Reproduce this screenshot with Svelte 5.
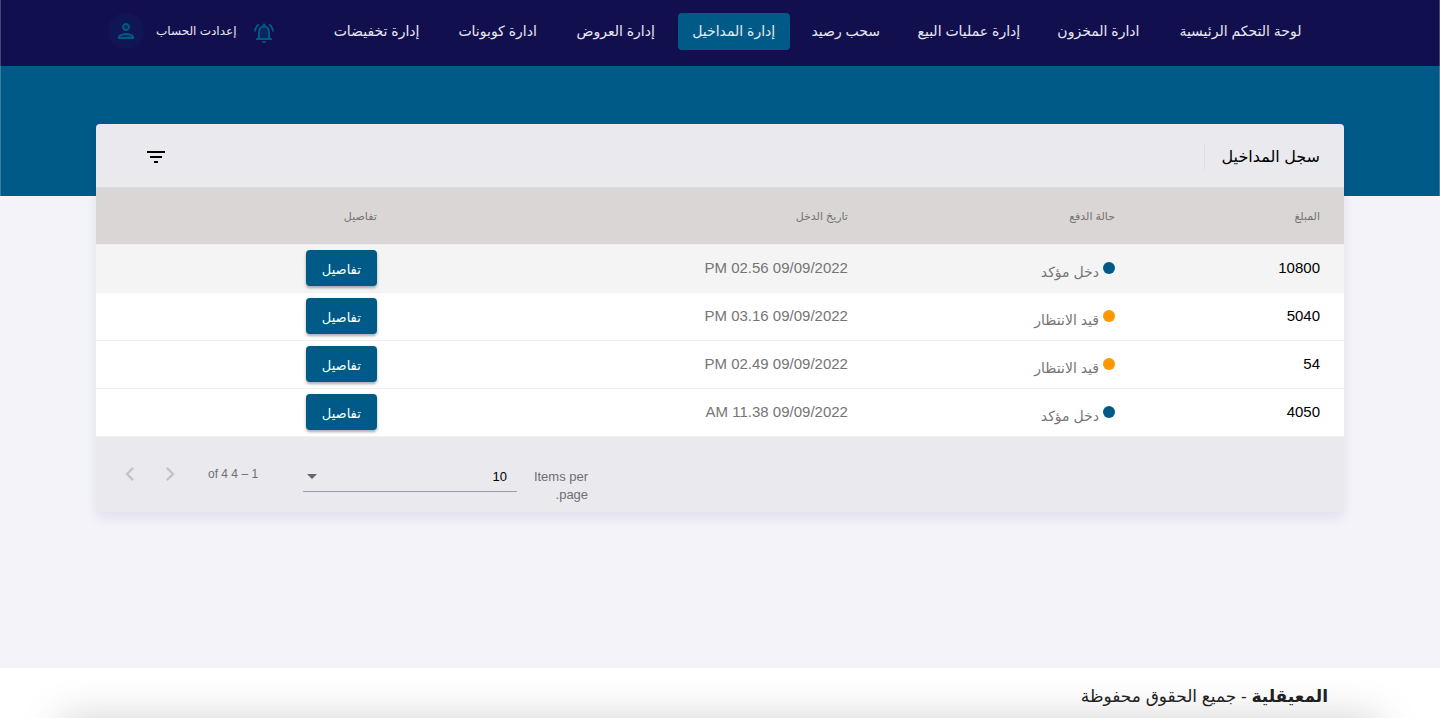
<script>
  const nav = [
    'لوحة التحكم الرئيسية',
    'ادارة المخزون',
    'إدارة عمليات البيع',
    'سحب رصيد',
    'إدارة المداخيل',
    'إدارة العروض',
    'ادارة كوبونات',
    'إدارة تخفيضات'
  ];
  const active = 4;

  const rows = [
    { amount: 10800, confirmed: true, date: '09/09/2022 02.56 PM' },
    { amount: 5040, confirmed: false, date: '09/09/2022 03.16 PM' },
    { amount: 54, confirmed: false, date: '09/09/2022 02.49 PM' },
    { amount: 4050, confirmed: true, date: '09/09/2022 11.38 AM' }
  ];
</script>

<div class="page" dir="rtl" lang="ar">
  <header>
    <nav>
      {#each nav as item, i}
        <a href="#{i}" class:active={i === active}>{item}</a>
      {/each}
    </nav>
    <div class="account">
      <button class="bell" aria-label="الإشعارات">
        <svg viewBox="0 0 24 24" width="24" height="24" fill="currentColor">
          <path opacity=".3" d="M12 6.5c-2.49 0-4 2.02-4 4.5v6h8v-6c0-2.48-1.51-4.5-4-4.5z" />
          <path d="M12 22c1.1 0 2-.9 2-2h-4c0 1.1.9 2 2 2zm6-6v-5c0-3.07-1.63-5.64-4.5-6.32V4c0-.83-.67-1.5-1.5-1.5s-1.5.67-1.5 1.5v.68C7.64 5.36 6 7.92 6 11v5l-2 2v1h16v-1l-2-2zm-2 1H8v-6c0-2.48 1.51-4.5 4-4.5s4 2.02 4 4.5v6zM7.58 4.08L6.15 2.65C3.75 4.48 2.17 7.3 2.03 10.5h2c.15-2.65 1.51-4.97 3.55-6.42zm12.39 6.42h2c-.15-3.2-1.73-6.02-4.12-7.85l-1.42 1.43c2.02 1.45 3.39 3.77 3.54 6.42z" />
        </svg>
      </button>
      <a class="settings" href="#settings">إعدادت الحساب</a>
      <button class="avatar" aria-label="الحساب">
        <svg viewBox="0 0 24 24" width="24" height="24" fill="currentColor">
          <path opacity=".3" d="M12 16c-2.69 0-5.77 1.28-6 2h12c-.2-.71-3.3-2-6-2z" />
          <circle opacity=".3" cx="12" cy="8" r="2" />
          <path d="M12 14c-2.67 0-8 1.34-8 4v2h16v-2c0-2.66-5.33-4-8-4zm-6 4c.22-.72 3.31-2 6-2 2.7 0 5.8 1.29 6 2H6zm6-6c2.21 0 4-1.79 4-4s-1.79-4-4-4-4 1.79-4 4 1.79 4 4 4zm0-6c1.1 0 2 .9 2 2s-.9 2-2 2-2-.9-2-2 .9-2 2-2z" />
        </svg>
      </button>
    </div>
  </header>
  <div class="band"></div>

  <main>
    <section class="card">
      <div class="toolbar">
        <h1>سجل المداخيل</h1>
        <button class="filter" aria-label="تصفية">
          <svg viewBox="0 0 24 24" width="24" height="24"><path d="M10 18h4v-2h-4v2zM3 6v2h18V6H3zm3 7h12v-2H6v2z" /></svg>
        </button>
      </div>
      <table>
        <thead>
          <tr>
            <th class="c-amount">المبلغ</th>
            <th class="c-status">حالة الدفع</th>
            <th class="c-date">تاريخ الدخل</th>
            <th class="c-details">تفاصيل</th>
          </tr>
        </thead>
        <tbody>
          {#each rows as row, i}
            <tr class:hovered={i === 0}>
              <td class="c-amount">{row.amount}</td>
              <td>
                <span class="status">
                  <span class="dot" class:pending={!row.confirmed}></span>
                  <span class="state">{row.confirmed ? 'دخل مؤكد' : 'قيد الانتظار'}</span>
                </span>
              </td>
              <td class="c-date">{row.date}</td>
              <td><button class="details">تفاصيل</button></td>
            </tr>
          {/each}
        </tbody>
      </table>
      <div class="paginator">
        <label for="page-size">Items per page.</label>
        <div class="select">
          <select id="page-size">
            <option>10</option>
            <option>25</option>
          </select>
          <svg viewBox="0 0 10 5" width="10" height="5"><path d="M0 0h10L5 5z" /></svg>
        </div>
        <span class="range">1 – 4 of 4</span>
        <div class="pager">
          <button disabled aria-label="السابق">
            <svg viewBox="0 0 24 24" width="28" height="28"><path d="M10 6L8.59 7.41 13.17 12l-4.58 4.59L10 18l6-6z" /></svg>
          </button>
          <button disabled aria-label="التالي">
            <svg viewBox="0 0 24 24" width="28" height="28"><path d="M15.41 7.41L14 6l-6 6 6 6 1.41-1.41L10.83 12z" /></svg>
          </button>
        </div>
      </div>
    </section>
  </main>

  <footer><p><b>المعيقلية</b> - جميع الحقوق محفوظة</p></footer>
</div>

<style>
  :global(body) { background: #f3f3f9; }
  * { box-sizing: border-box; }
  .page {
    min-height: 100vh;
    display: flex;
    flex-direction: column;
    font-family: "Liberation Sans", "DejaVu Sans", sans-serif;
    font-size: 15px;
    color: #000;
  }
  button { border: 0; padding: 0; background: none; font: inherit; color: inherit; display: flex; align-items: center; justify-content: center; }
  a { text-decoration: none; color: #e9e8f2; white-space: nowrap; }
  svg { display: block; }
  header, .band { border: 0 solid #ffffff38; border-width: 0 1px; }
  header {
    height: 66px;
    display: flex;
    align-items: center;
    gap: 44px;
    padding: 0 119px 4px 107px;
    background: #120f4f;
  }
  nav {
    flex: 1;
    display: grid;
    grid-template-columns: 159fr 109fr 134fr 96fr 112fr 108fr 112fr 114fr;
    gap: 8px;
    font-size: 14px;
    text-align: center;
  }
  nav a { line-height: 37px; border-radius: 4px; }
  nav a.active { background: #005a87; }
  .account { display: flex; align-items: center; color: #005a87; }
  .bell { margin-left: 15px; padding-top: 4px; }
  .settings { font-size: 12px; }
  .avatar { width: 36px; height: 36px; margin-right: 12px; border-radius: 50%; background: #101554; }
  .band { height: 130px; background: #005a87; }
  main { flex: 1; padding: 0 96px; }
  .card {
    margin-top: -72px;
    border-radius: 4px;
    background: #eae9ee;
    box-shadow: 0 6px 12px #1a106014;
  }
  .toolbar { height: 64px; display: flex; align-items: center; justify-content: space-between; padding: 2px 24px 0 48px; border-bottom: 1px solid #dedce1; }
  h1 { margin: 0; padding-left: 16px; border-left: 1px solid #dfdee3; font-size: 16px; font-weight: 400; line-height: 26px; }
  .filter path { fill: #000; }
  table { width: 100%; border-collapse: collapse; table-layout: fixed; }
  th { height: 56px; padding: 2px 0 0; background: #dad6d5; color: #76736f; font-size: 11px; font-weight: 400; text-align: right; }
  td { height: 48px; padding: 0; border-top: 1px solid #f0f0f2; color: #757575; }
  tbody tr { background: #fff; }
  tbody tr.hovered { background: #f4f4f4; }
  .c-amount { width: 18.35%; padding-right: 24px; color: #000; }
  th.c-amount { color: #76736f; }
  .c-status { width: 21.4%; }
  .c-date { width: 37.75%; }
  td.c-amount, td.c-date { padding-bottom: 2px; }
  .status { display: flex; align-items: center; gap: 4px; height: 24px; }
  .dot { width: 12px; height: 12px; border-radius: 50%; background: #005a87; }
  .dot.pending { background: #ff9800; }
  .state { font-size: 14px; padding-top: 8px; }
  .details { min-width: 71px; height: 36px; padding: 2px 15px 0; border-radius: 4px; background: #005a87; color: #fff; font-size: 13px; box-shadow: 0 2px 3px #0005; }
  .paginator { height: 76px; display: flex; align-items: center; justify-content: flex-end; padding-left: 14px; border-top: 1px solid #f0f0f2; color: #6f6e73; font-size: 13px; }
  .paginator label { width: 56px; line-height: 18px; padding-top: 22px; }
  .select { display: flex; align-items: center; width: 214px; height: 30px; margin: 4px 15px 0 45px; border-bottom: 1px solid #9d9bb0; }
  .select select { flex: 1; min-width: 0; appearance: none; border: 0; padding: 0 10px 0 0; background: none; font: inherit; color: #000; }
  .select svg { margin-left: 4px; fill: #66656a; }
  .range { margin-left: 18px; padding-bottom: 2px; font-size: 12px; }
  .pager { display: flex; padding-bottom: 2px; }
  .pager button { width: 40px; height: 40px; fill: #c4c3c8; }
  footer { position: relative; overflow: hidden; height: 50px; padding: 0 112px; background: #fff; }
  footer::after { content: ""; position: absolute; top: 100%; left: 60px; right: 60px; height: 60px; box-shadow: 0 0 42px #0000002e; }
  footer p { margin: 0; line-height: 58px; font-size: 17px; color: #222; }
</style>
